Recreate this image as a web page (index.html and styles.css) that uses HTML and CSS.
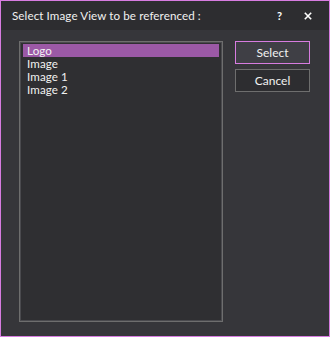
FILE: index.html
```html
<!DOCTYPE html>
<html>
<head>
<meta charset="utf-8">
<link rel="stylesheet" href="styles.css">
</head>
<body>
<div class="window">
  <div class="titlebar">
    <span class="title">Select Image View to be referenced :</span>
    <span class="help">?</span>
    <span class="close">
      <svg width="8" height="8" viewBox="0 0 8 8"><path d="M0.8 0.8 L7.2 7.2 M7.2 0.8 L0.8 7.2" stroke="#ffffff" stroke-width="1.6" fill="none"/></svg>
    </span>
  </div>
  <div class="content">
    <div class="listbox">
      <div class="item selected">Logo</div>
      <div class="item">Image</div>
      <div class="item">Image 1</div>
      <div class="item">Image 2</div>
    </div>
    <div class="buttons">
      <div class="btn primary">Select</div>
      <div class="btn">Cancel</div>
    </div>
  </div>
</div>
</body>
</html>
```
FILE: styles.css
```css
html, body {
  margin: 0;
  padding: 0;
  background: #36363a;
}
.window {
  width: 330px;
  height: 337px;
  box-sizing: border-box;
  border: 1px solid #d77ce0;
  background: #36363a;
  font-family: Lato, "Open Sans", sans-serif;
  font-size: 12px;
  color: #f1f1f1;
  display: flex;
  flex-direction: column;
}
.titlebar {
  height: 29px;
  background: #2d2d30;
  display: flex;
  align-items: center;
  padding-left: 11px;
  padding-right: 17px;
}
.title {
  flex: 1;
  white-space: nowrap;
  font-size: 11.6px;
  letter-spacing: 0.1px;
}
.help {
  font-weight: bold;
  font-size: 11px;
  margin-right: 22px;
  color: #ffffff;
}
.close {
  display: flex;
  align-items: center;
}
.content {
  display: flex;
  padding: 11px 0 0 18px;
  gap: 12px;
}
.listbox {
  width: 204px;
  height: 281px;
  box-sizing: border-box;
  border: 1px solid #6e6e6e;
  box-shadow: inset 0 0 0 1px #4a4a4e;
  background: #2f2f32;
  padding: 2px 3px 2px 3px;
}
.item {
  height: 13px;
  line-height: 13px;
  padding-left: 4px;
  white-space: nowrap;
  font-size: 11.6px;
  letter-spacing: 0.1px;
}
.item.selected {
  background: #9b59a6;
}
.buttons {
  display: flex;
  flex-direction: column;
  gap: 5px;
}
.btn {
  width: 75px;
  height: 23px;
  box-sizing: border-box;
  border: 1px solid #6e6e6e;
  background: #2d2d30;
  display: flex;
  align-items: center;
  justify-content: center;
  font-size: 12px;
}
.btn.primary {
  border-color: #d77ce0;
  background: #3f3f45;
}
```
